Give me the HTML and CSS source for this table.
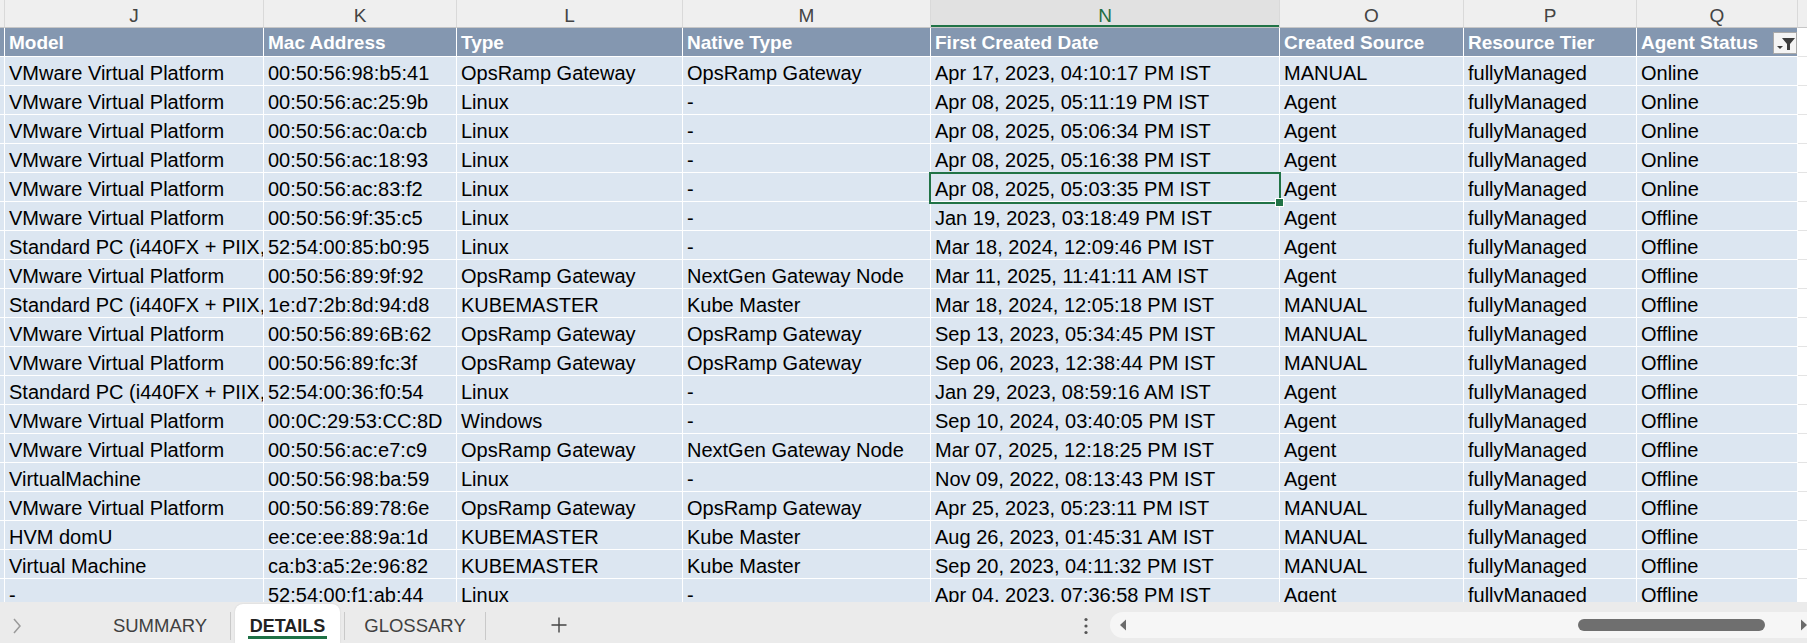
FILE: index.html
```html
<!DOCTYPE html>
<html>
<head>
<meta charset="utf-8">
<link rel="stylesheet" href="styles.css">
</head>
<body>
<div class="sheet">
  <div class="row colheads">
    <div class="c"></div><div class="c">J</div><div class="c">K</div><div class="c">L</div><div class="c">M</div><div class="c sel">N</div><div class="c">O</div><div class="c">P</div><div class="c">Q</div><div class="c last"></div>
  </div>
  <div class="grid">
    <div class="row hdr">
      <div class="c"></div><div class="c">Model</div><div class="c">Mac Address</div><div class="c">Type</div><div class="c">Native Type</div><div class="c">First Created Date</div><div class="c">Created Source</div><div class="c">Resource Tier</div>
      <div class="c q"><span>Agent Status</span><span class="filter"><svg width="22" height="20" viewBox="0 0 22 20"><polygon points="3,13 9,13 6,16" fill="#3c3c3c"/><polygon points="8,5 21,5 16,11 16,17 13,17 13,11" fill="#3c3c3c"/></svg></span></div>
      <div class="c last"></div>
    </div>
    <div class="row data"><div class="c"></div><div class="c">VMware Virtual Platform</div><div class="c">00:50:56:98:b5:41</div><div class="c">OpsRamp Gateway</div><div class="c">OpsRamp Gateway</div><div class="c">Apr 17, 2023, 04:10:17 PM IST</div><div class="c">MANUAL</div><div class="c">fullyManaged</div><div class="c">Online</div><div class="c last"></div></div>
    <div class="row data"><div class="c"></div><div class="c">VMware Virtual Platform</div><div class="c">00:50:56:ac:25:9b</div><div class="c">Linux</div><div class="c">-</div><div class="c">Apr 08, 2025, 05:11:19 PM IST</div><div class="c">Agent</div><div class="c">fullyManaged</div><div class="c">Online</div><div class="c last"></div></div>
    <div class="row data"><div class="c"></div><div class="c">VMware Virtual Platform</div><div class="c">00:50:56:ac:0a:cb</div><div class="c">Linux</div><div class="c">-</div><div class="c">Apr 08, 2025, 05:06:34 PM IST</div><div class="c">Agent</div><div class="c">fullyManaged</div><div class="c">Online</div><div class="c last"></div></div>
    <div class="row data"><div class="c"></div><div class="c">VMware Virtual Platform</div><div class="c">00:50:56:ac:18:93</div><div class="c">Linux</div><div class="c">-</div><div class="c">Apr 08, 2025, 05:16:38 PM IST</div><div class="c">Agent</div><div class="c">fullyManaged</div><div class="c">Online</div><div class="c last"></div></div>
    <div class="row data"><div class="c"></div><div class="c">VMware Virtual Platform</div><div class="c">00:50:56:ac:83:f2</div><div class="c">Linux</div><div class="c">-</div><div class="c">Apr 08, 2025, 05:03:35 PM IST</div><div class="c">Agent</div><div class="c">fullyManaged</div><div class="c">Online</div><div class="c last"></div></div>
    <div class="row data"><div class="c"></div><div class="c">VMware Virtual Platform</div><div class="c">00:50:56:9f:35:c5</div><div class="c">Linux</div><div class="c">-</div><div class="c">Jan 19, 2023, 03:18:49 PM IST</div><div class="c">Agent</div><div class="c">fullyManaged</div><div class="c">Offline</div><div class="c last"></div></div>
    <div class="row data"><div class="c"></div><div class="c">Standard PC (i440FX + PIIX, 1996)</div><div class="c">52:54:00:85:b0:95</div><div class="c">Linux</div><div class="c">-</div><div class="c">Mar 18, 2024, 12:09:46 PM IST</div><div class="c">Agent</div><div class="c">fullyManaged</div><div class="c">Offline</div><div class="c last"></div></div>
    <div class="row data"><div class="c"></div><div class="c">VMware Virtual Platform</div><div class="c">00:50:56:89:9f:92</div><div class="c">OpsRamp Gateway</div><div class="c">NextGen Gateway Node</div><div class="c">Mar 11, 2025, 11:41:11 AM IST</div><div class="c">Agent</div><div class="c">fullyManaged</div><div class="c">Offline</div><div class="c last"></div></div>
    <div class="row data"><div class="c"></div><div class="c">Standard PC (i440FX + PIIX, 1996)</div><div class="c">1e:d7:2b:8d:94:d8</div><div class="c">KUBEMASTER</div><div class="c">Kube Master</div><div class="c">Mar 18, 2024, 12:05:18 PM IST</div><div class="c">MANUAL</div><div class="c">fullyManaged</div><div class="c">Offline</div><div class="c last"></div></div>
    <div class="row data"><div class="c"></div><div class="c">VMware Virtual Platform</div><div class="c">00:50:56:89:6B:62</div><div class="c">OpsRamp Gateway</div><div class="c">OpsRamp Gateway</div><div class="c">Sep 13, 2023, 05:34:45 PM IST</div><div class="c">MANUAL</div><div class="c">fullyManaged</div><div class="c">Offline</div><div class="c last"></div></div>
    <div class="row data"><div class="c"></div><div class="c">VMware Virtual Platform</div><div class="c">00:50:56:89:fc:3f</div><div class="c">OpsRamp Gateway</div><div class="c">OpsRamp Gateway</div><div class="c">Sep 06, 2023, 12:38:44 PM IST</div><div class="c">MANUAL</div><div class="c">fullyManaged</div><div class="c">Offline</div><div class="c last"></div></div>
    <div class="row data"><div class="c"></div><div class="c">Standard PC (i440FX + PIIX, 1996)</div><div class="c">52:54:00:36:f0:54</div><div class="c">Linux</div><div class="c">-</div><div class="c">Jan 29, 2023, 08:59:16 AM IST</div><div class="c">Agent</div><div class="c">fullyManaged</div><div class="c">Offline</div><div class="c last"></div></div>
    <div class="row data"><div class="c"></div><div class="c">VMware Virtual Platform</div><div class="c">00:0C:29:53:CC:8D</div><div class="c">Windows</div><div class="c">-</div><div class="c">Sep 10, 2024, 03:40:05 PM IST</div><div class="c">Agent</div><div class="c">fullyManaged</div><div class="c">Offline</div><div class="c last"></div></div>
    <div class="row data"><div class="c"></div><div class="c">VMware Virtual Platform</div><div class="c">00:50:56:ac:e7:c9</div><div class="c">OpsRamp Gateway</div><div class="c">NextGen Gateway Node</div><div class="c">Mar 07, 2025, 12:18:25 PM IST</div><div class="c">Agent</div><div class="c">fullyManaged</div><div class="c">Offline</div><div class="c last"></div></div>
    <div class="row data"><div class="c"></div><div class="c">VirtualMachine</div><div class="c">00:50:56:98:ba:59</div><div class="c">Linux</div><div class="c">-</div><div class="c">Nov 09, 2022, 08:13:43 PM IST</div><div class="c">Agent</div><div class="c">fullyManaged</div><div class="c">Offline</div><div class="c last"></div></div>
    <div class="row data"><div class="c"></div><div class="c">VMware Virtual Platform</div><div class="c">00:50:56:89:78:6e</div><div class="c">OpsRamp Gateway</div><div class="c">OpsRamp Gateway</div><div class="c">Apr 25, 2023, 05:23:11 PM IST</div><div class="c">MANUAL</div><div class="c">fullyManaged</div><div class="c">Offline</div><div class="c last"></div></div>
    <div class="row data"><div class="c"></div><div class="c">HVM domU</div><div class="c">ee:ce:ee:88:9a:1d</div><div class="c">KUBEMASTER</div><div class="c">Kube Master</div><div class="c">Aug 26, 2023, 01:45:31 AM IST</div><div class="c">MANUAL</div><div class="c">fullyManaged</div><div class="c">Offline</div><div class="c last"></div></div>
    <div class="row data"><div class="c"></div><div class="c">Virtual Machine</div><div class="c">ca:b3:a5:2e:96:82</div><div class="c">KUBEMASTER</div><div class="c">Kube Master</div><div class="c">Sep 20, 2023, 04:11:32 PM IST</div><div class="c">MANUAL</div><div class="c">fullyManaged</div><div class="c">Offline</div><div class="c last"></div></div>
    <div class="row data"><div class="c"></div><div class="c">-</div><div class="c">52:54:00:f1:ab:44</div><div class="c">Linux</div><div class="c">-</div><div class="c">Apr 04, 2023, 07:36:58 PM IST</div><div class="c">Agent</div><div class="c">fullyManaged</div><div class="c">Offline</div><div class="c last"></div></div>
    <div class="selection"><div class="handle"></div></div>
  </div>
  <div class="tabbar">
    <div class="nav"><svg width="10" height="16" viewBox="0 0 10 16"><polyline points="2,1 8,8 2,15" fill="none" stroke="#9a9a9a" stroke-width="1.5"/></svg></div>
    <div class="tab w140"><span>SUMMARY</span></div>
    <div class="sep"></div>
    <div class="tab active"><span>DETAILS</span></div>
    <div class="sep gapl"></div>
    <div class="tab w140"><span>GLOSSARY</span></div>
    <div class="sep"></div>
    <div class="plus"><svg width="18" height="18" viewBox="0 0 18 18"><path d="M9 1.5V16.5M1.5 9H16.5" stroke="#444" stroke-width="1.4" fill="none"/></svg></div>
    <div class="more"><svg width="4" height="18" viewBox="0 0 4 18"><circle cx="2" cy="2.5" r="1.6" fill="#555"/><circle cx="2" cy="9" r="1.6" fill="#555"/><circle cx="2" cy="15.5" r="1.6" fill="#555"/></svg></div>
    <div class="track">
      <svg class="arr-l" width="8" height="12" viewBox="0 0 8 12"><polygon points="7,0.5 7,11.5 1,6" fill="#6b6b6b"/></svg>
      <div class="thumb"></div>
      <svg class="arr-r" width="8" height="12" viewBox="0 0 8 12"><polygon points="1,0.5 1,11.5 7,6" fill="#6b6b6b"/></svg>
    </div>
  </div>
</div>
</body>
</html>
```

FILE: styles.css
```css
* { box-sizing: border-box; margin: 0; padding: 0; }
html, body { width: 1807px; height: 643px; overflow: hidden; background: #ffffff; }
body { font-family: "Liberation Sans", Arial, sans-serif; color: #000; }

.sheet { display: flex; flex-direction: column; height: 643px; }

.row {
  display: grid;
  grid-template-columns: 5px 259px 193px 226px 248px 349px 184px 173px 161px 1fr;
  flex: none;
}

.c {
  overflow: hidden;
  white-space: nowrap;
  border-right: 1px solid #ffffff;
  border-bottom: 1px solid #ffffff;
}

/* column letters */
.colheads { height: 28px; }
.colheads .c {
  height: 28px;
  background: #efefef;
  border-right: 1px solid #d9d9d9;
  border-bottom: 1px solid #c6c6c6;
  color: #444;
  font-size: 19px;
  text-align: center;
  padding-top: 4px;
  line-height: 23px;
}
.colheads .c.sel {
  background: #e1e1e1;
  color: #1f6e43;
  box-shadow: inset 0 -2px 0 #217346;
}
.colheads .c.last { border-right: 0; }

.grid {
  flex: 1;
  min-height: 0;
  overflow: hidden;
  position: relative;
  display: flex;
  flex-direction: column;
}

/* table header */
.hdr { height: 29px; }
.hdr .c {
  background: #8497b0;
  color: #ffffff;
  font-weight: 700;
  font-size: 19px;
  padding: 2px 0 0 4px;
  line-height: 25px;
}
.hdr .c.q { display: flex; align-items: flex-start; }
.filter {
  margin-left: auto;
  margin-top: 2px;
  width: 24px;
  height: 22px;
  background: #f4f4f4;
  border: 1px solid #a9a9a9;
  display: flex;
  align-items: center;
  justify-content: center;
}
.filter svg { display: block; }

/* data rows */
.data { height: 29px; }
.data .c {
  background: #dce6f1;
  font-size: 20px;
  padding: 4px 0 0 4px;
  line-height: 24px;
}
.hdr .c.last, .data .c.last {
  background: #ffffff;
  border-right: 0;
  border-bottom: 1px solid #e4e4e4;
}

.selection {
  position: absolute;
  left: 929px;
  top: 144px;
  width: 352px;
  height: 32px;
  border: 2px solid #217346;
}
.handle {
  position: absolute;
  right: -4px;
  bottom: -4px;
  width: 7px;
  height: 7px;
  background: #217346;
  outline: 1px solid #ffffff;
}

/* sheet tab bar */
.tabbar {
  height: 41px;
  flex: none;
  background: #ebebeb;
  display: flex;
  align-items: stretch;
  overflow: hidden;
}
.nav {
  width: 90px;
  flex: none;
  display: flex;
  align-items: center;
  padding: 6px 0 0 12px;
}
.nav svg { display: block; }
.tab {
  flex: none;
  display: flex;
  justify-content: center;
  padding-top: 14px;
  font-size: 18.5px;
  color: #404040;
}
.tab span {
  line-height: 20px;
  height: 23px;
  padding: 0 2px;
  border-bottom: 3px solid transparent;
}
.w140 { width: 140px; }
.tab.active {
  width: 105px;
  margin: 2px 4px 0 4px;
  padding-top: 12px;
  background: #ffffff;
  border-radius: 8px 8px 0 0;
  box-shadow: 0 0 2px rgba(0,0,0,0.12);
  color: #222;
  font-weight: 700;
  font-size: 18px;
}
.tab.active span { border-bottom-color: #1e7145; }
.sep {
  width: 1px;
  flex: none;
  background: #c9c9c9;
  margin: 10px 0 3px 0;
}
.plus {
  width: 40px;
  flex: none;
  margin-left: 53px;
  display: flex;
  align-items: center;
  justify-content: center;
  padding-top: 4px;
}
.plus svg, .more svg { display: block; }
.more {
  margin-left: auto;
  width: 24px;
  flex: none;
  display: flex;
  align-items: center;
  justify-content: center;
  padding-top: 6px;
}
.track {
  flex: none;
  width: 697px;
  height: 26px;
  margin: 10px 0 0 12px;
  background: #f6f6f6;
  border-radius: 13px 0 0 13px;
  display: flex;
  align-items: center;
}
.arr-l { display: block; margin-left: 9px; flex: none; }
.thumb {
  flex: none;
  width: 187px;
  height: 12px;
  margin-left: 451px;
  background: #6f6f6f;
  border-radius: 6px;
}
.arr-r { display: block; margin-left: 35px; flex: none; }
```
